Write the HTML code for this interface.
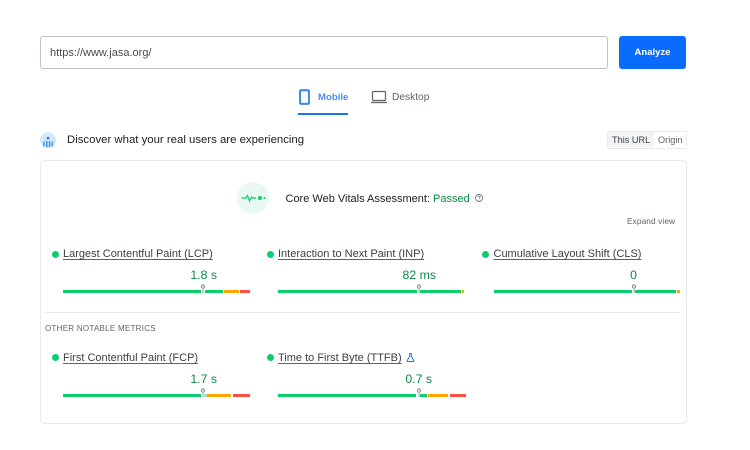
<!DOCTYPE html>
<html><head><meta charset="utf-8">
<style>
html,body{margin:0;padding:0;background:#fff}
#p{position:relative;width:750px;height:450px;overflow:hidden;background:#fff;font-family:"Liberation Sans",sans-serif;filter:blur(.25px)}
#p div,#p span.a,#p svg{position:absolute}
.t{white-space:nowrap;line-height:16px}
.m{font-size:11px;color:#3c4043;text-decoration:underline;text-underline-offset:2px;text-decoration-color:#5f6368}
.v{font-size:12.3px;color:#0a8a46;text-align:right}
.d{width:7px;height:7px;border-radius:50%;background:#0cce6b}
.b{height:3px}
.g{background:#0cce6b}.o{background:#ffa400}.r{background:#ff4e42}
</style></head><body><div id="p">
<div style="left:40px;top:36px;width:566px;height:31px;border:1px solid #bdc1c6;border-radius:3px"></div>
<div class="t" style="left:50px;top:44.5px;font-size:11px;color:#4a4d51">https://www.jasa.org/</div>
<div style="left:619px;top:36px;width:67px;height:33px;background:#0a6cff;border-radius:3px"></div>
<div class="t" style="left:619px;top:44.5px;width:67px;text-align:center;font-size:9.5px;font-weight:bold;color:#fff">Analyze</div>

<svg style="left:298px;top:88px" width="14" height="18" viewBox="0 0 14 18"><rect x="2" y="2" width="9" height="14" rx="1.2" fill="#cfe0fb" stroke="#1a73e8" stroke-width="1.6"/><rect x="3" y="4" width="7" height="10" fill="#fff"/></svg>
<div class="t" style="left:318px;top:89.5px;font-size:9.6px;color:#1a73e8;font-weight:bold;opacity:.8">Mobile</div>
<div style="left:298px;top:113px;width:50px;height:1.5px;background:#1a73e8"></div>
<svg style="left:370px;top:89px" width="18" height="16" viewBox="0 0 18 16"><rect x="2.5" y="2.5" width="13" height="9" rx="1" fill="none" stroke="#5f6368" stroke-width="1.2"/><path d="M1 13.5H17" stroke="#5f6368" stroke-width="1.3"/></svg>
<div class="t" style="left:392px;top:89.5px;font-size:10.2px;color:#5f6368">Desktop</div>

<svg style="left:39px;top:131px" width="18" height="18" viewBox="0 0 18 18"><circle cx="9" cy="9" r="8" fill="#d7e8fb"/><circle cx="9" cy="7" r="1.3" fill="#1a73e8"/><path d="M5 10.5v5M7.8 10v6M10.6 10v6M13.4 10.5v5" stroke="#4a9bea" stroke-width="1.6"/></svg>
<div class="t" style="left:67px;top:132px;font-size:11.38px;color:#202124">Discover what your real users are experiencing</div>
<div style="left:607px;top:131px;width:78px;height:16px;border:1px solid #e8eaed;border-radius:2px"></div>
<div style="left:608px;top:132px;width:46px;height:14.5px;background:#f1f3f4"></div>
<div class="t" style="left:612px;top:131.5px;font-size:9.2px;color:#3c4043">This URL</div>
<div class="t" style="left:658px;top:131.5px;font-size:9.2px;color:#5f6368">Origin</div>

<div style="left:40px;top:160px;width:645px;height:262px;border:1px solid #e8eaed;border-radius:5px"></div>

<div style="left:237px;top:182px;width:32px;height:32px;border-radius:50%;background:#e9f9f1"></div>
<svg style="left:237px;top:182px" width="32" height="32" viewBox="0 0 32 32"><path d="M4.5 16H9L10.5 13.5 12.5 19 14.5 15 15.5 16H19" fill="none" stroke="#0cce6b" stroke-width="1.2"/><circle cx="23" cy="16" r="2" fill="#0cce6b"/><circle cx="27.5" cy="16" r="1" fill="#0cce6b"/></svg>
<div class="t" style="left:285.5px;top:190.5px;font-size:11px;color:#202124">Core Web Vitals Assessment: <span style="color:#0a8a46">Passed</span></div>
<svg style="left:474px;top:193px" width="10" height="10" viewBox="0 0 10 10"><circle cx="5" cy="5" r="3.5" fill="none" stroke="#757575" stroke-width=".9"/><path d="M3.9 4.2a1.1 1.1 0 1 1 1.5 1L5 5.8M5 6.6v.8" fill="none" stroke="#757575" stroke-width=".7"/></svg>
<div class="t" style="left:627px;top:213px;font-size:8.3px;color:#5f6368;letter-spacing:.1px">Expand view</div>

<div class="d" style="left:52px;top:250.5px"></div>
<div class="t m" style="left:63px;top:246px">Largest Contentful Paint (LCP)</div>
<div class="t v" style="left:117px;top:267px;width:100px">1.8 s</div>
<div class="b g" style="left:63px;top:289.5px;width:138px"></div>
<div class="b g" style="left:205px;top:289.5px;width:18px"></div>
<div class="b o" style="left:224px;top:289.5px;width:15px"></div>
<div class="b r" style="left:240px;top:289.5px;width:10px"></div>
<svg style="left:200px;top:283px" width="6" height="11" viewBox="0 0 6 11"><circle cx="3" cy="3.5" r="1.6" fill="#fff" stroke="#80868b"/><path d="M3 5v5" stroke="#9aa0a6"/></svg>

<div class="d" style="left:267px;top:250.5px"></div>
<div class="t m" style="left:278px;top:246px">Interaction to Next Paint (INP)</div>
<div class="t v" style="left:336px;top:267px;width:100px">82 ms</div>
<div class="b g" style="left:278px;top:289.5px;width:138.5px"></div>
<div class="b g" style="left:420px;top:289.5px;width:41px"></div>
<div class="b o" style="left:462px;top:289.5px;width:2px"></div>
<svg style="left:415.5px;top:283px" width="6" height="11" viewBox="0 0 6 11"><circle cx="3" cy="3.5" r="1.6" fill="#fff" stroke="#80868b"/><path d="M3 5v5" stroke="#9aa0a6"/></svg>

<div class="d" style="left:482px;top:250.5px"></div>
<div class="t m" style="left:493.5px;top:246px">Cumulative Layout Shift (CLS)</div>
<div class="t v" style="left:537px;top:267px;width:100px">0</div>
<div class="b g" style="left:493.5px;top:289.5px;width:138px"></div>
<div class="b g" style="left:635px;top:289.5px;width:41px"></div>
<div class="b o" style="left:677px;top:289.5px;width:2.5px"></div>
<svg style="left:630.5px;top:283px" width="6" height="11" viewBox="0 0 6 11"><circle cx="3" cy="3.5" r="1.6" fill="#fff" stroke="#80868b"/><path d="M3 5v5" stroke="#9aa0a6"/></svg>

<div style="left:45px;top:312px;width:635px;height:1px;background:#e8eaed"></div>
<div class="t" style="left:45px;top:320.5px;font-size:8px;color:#5f6368;letter-spacing:.27px">OTHER NOTABLE METRICS</div>

<div class="d" style="left:52px;top:353.5px"></div>
<div class="t m" style="left:63px;top:350px">First Contentful Paint (FCP)</div>
<div class="t v" style="left:117px;top:370.5px;width:100px">1.7 s</div>
<div class="b g" style="left:63px;top:393.5px;width:138px"></div>
<div class="b" style="left:204px;top:393.5px;width:2.5px;background:#a8e6c8"></div>
<div class="b o" style="left:207px;top:393.5px;width:24px"></div>
<div class="b r" style="left:232.5px;top:393.5px;width:17.5px"></div>
<svg style="left:200px;top:387px" width="6" height="11" viewBox="0 0 6 11"><circle cx="3" cy="3.5" r="1.6" fill="#fff" stroke="#80868b"/><path d="M3 5v5" stroke="#9aa0a6"/></svg>

<div class="d" style="left:267px;top:353.5px"></div>
<div class="t m" style="left:278px;top:350px">Time to First Byte (TTFB)</div>
<svg style="left:405px;top:352px" width="11" height="11" viewBox="0 0 11 11"><path d="M4.2 1.5h2.6M4.7 1.5v2.8L2.2 8.6c-.2.5 0 .9.6.9h5.4c.6 0 .8-.4.6-.9L6.3 4.3V1.5" fill="none" stroke="#1a73e8" stroke-width="1"/></svg>
<div class="t v" style="left:332px;top:370.5px;width:100px">0.7 s</div>
<div class="b g" style="left:278px;top:393.5px;width:138px"></div>
<div class="b g" style="left:420px;top:393.5px;width:6.5px"></div>
<div class="b o" style="left:428px;top:393.5px;width:20px"></div>
<div class="b r" style="left:450px;top:393.5px;width:15.5px"></div>
<svg style="left:415.5px;top:387px" width="6" height="11" viewBox="0 0 6 11"><circle cx="3" cy="3.5" r="1.6" fill="#fff" stroke="#80868b"/><path d="M3 5v5" stroke="#9aa0a6"/></svg>
</div></body></html>
